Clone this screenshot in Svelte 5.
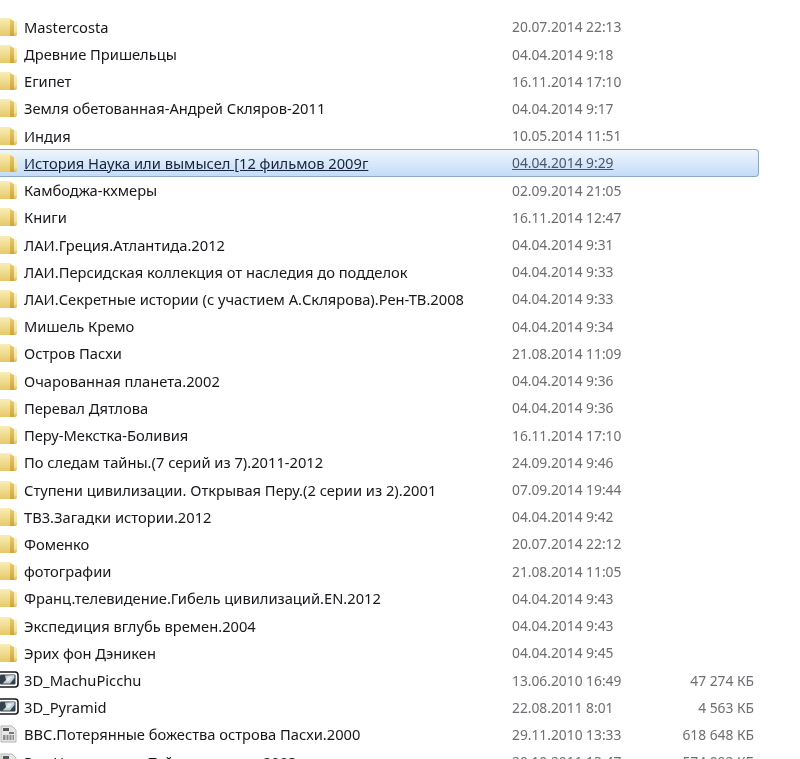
<script lang="ts">
	const folders = [
		['Mastercosta', '20.07.2014 22:13'],
		['Древние Пришельцы', '04.04.2014 9:18'],
		['Египет', '16.11.2014 17:10'],
		['Земля обетованная-Андрей Скляров-2011', '04.04.2014 9:17'],
		['Индия', '10.05.2014 11:51'],
		['История Наука или вымысел [12 фильмов 2009г', '04.04.2014 9:29'],
		['Камбоджа-кхмеры', '02.09.2014 21:05'],
		['Книги', '16.11.2014 12:47'],
		['ЛАИ.Греция.Атлантида.2012', '04.04.2014 9:31'],
		['ЛАИ.Персидская коллекция от наследия до подделок', '04.04.2014 9:33'],
		['ЛАИ.Секретные истории (с участием А.Склярова).Рен-ТВ.2008', '04.04.2014 9:33'],
		['Мишель Кремо', '04.04.2014 9:34'],
		['Остров Пасхи', '21.08.2014 11:09'],
		['Очарованная планета.2002', '04.04.2014 9:36'],
		['Перевал Дятлова', '04.04.2014 9:36'],
		['Перу-Мекстка-Боливия', '16.11.2014 17:10'],
		['По следам тайны.(7 серий из 7).2011-2012', '24.09.2014 9:46'],
		['Ступени цивилизации. Открывая Перу.(2 серии из 2).2001', '07.09.2014 19:44'],
		['ТВ3.Загадки истории.2012', '04.04.2014 9:42'],
		['Фоменко', '20.07.2014 22:12'],
		['фотографии', '21.08.2014 11:05'],
		['Франц.телевидение.Гибель цивилизаций.EN.2012', '04.04.2014 9:43'],
		['Экспедиция вглубь времен.2004', '04.04.2014 9:43'],
		['Эрих фон Дэникен', '04.04.2014 9:45']
	];

	const files = [
		{ name: '3D_MachuPicchu', date: '13.06.2010 16:49', size: '47 274 КБ', icon: 'app' },
		{ name: '3D_Pyramid', date: '22.08.2011 8:01', size: '4 563 КБ', icon: 'app' },
		{ name: 'BBC.Потерянные божества острова Пасхи.2000', date: '29.11.2010 13:33', size: '618 648 КБ', icon: 'video' },
		{ name: 'Рок.Неизвестная Тайна пирамид.2003', date: '20.10.2011 13:47', size: '574 092 КБ', icon: 'video' }
	];
</script>

{#snippet folderIcon()}
	<svg class="icon" width="20" height="20" viewBox="0 0 20 20">
		<defs>
			<linearGradient id="folder-back" x1="0" y1="0" x2="0" y2="1">
				<stop offset="0" stop-color="#f9eeb8" />
				<stop offset="1" stop-color="#e6c868" />
			</linearGradient>
			<linearGradient id="folder-front" x1="0" y1="0" x2="0" y2="1">
				<stop offset="0" stop-color="#e8cc6e" />
				<stop offset="1" stop-color="#cfa438" />
			</linearGradient>
			<linearGradient id="folder-edge" x1="0" y1="0" x2="0" y2="1">
				<stop offset="0" stop-color="#fbf0c0" />
				<stop offset="0.7" stop-color="#f4e29a" />
				<stop offset="1" stop-color="#d9b850" />
			</linearGradient>
		</defs>
		<path d="M0 1h11v18H0z" fill="url(#folder-back)" />
		<path d="M10 2l4 2v15h-4z" fill="url(#folder-front)" />
		<path d="M14 4h2c1 0 1 1 1 2v11c0 1-1 2-2 2h-1z" fill="url(#folder-edge)" />
	</svg>
{/snippet}

{#snippet appIcon()}
	<svg class="icon" width="20" height="20" viewBox="0 0 20 20">
		<rect x="-3" y="2" width="21" height="15" rx="3" fill="#fff" stroke="#16181c" stroke-width="1.6" />
		<rect x="0" y="4.500" width="15.500" height="10" rx="1" fill="#33424f" />
		<path d="M5 5.500l9.500-.500v3L10 13.500H2.500L6 10z" fill="#c4ced5" />
		<path d="M8 6.500h5L9 11H6z" fill="#e6ebee" />
	</svg>
{/snippet}

{#snippet videoIcon()}
	<svg class="icon" width="20" height="20" viewBox="0 0 20 20">
		<path d="M1 2h11l4 4v12H1z" fill="#e6e6e4" stroke="#b4b4b0" />
		<rect x="3" y="4" width="6" height="3" fill="#55585a" />
		<rect x="9" y="8" width="5" height="2" fill="#77797a" />
		<rect x="3" y="11" width="11" height="5" fill="#8b8d8c" />
		<path d="M6 11v5M9 11v5M12 11v5" stroke="#e6e6e4" />
	</svg>
{/snippet}

<div class="list">
	{#each folders as [name, date], i}
		<div class="row" class:hot={i === 5}>
			{@render folderIcon()}
			<span class="name">{name}</span>
			<span class="date">{date}</span>
			<span class="size"></span>
		</div>
	{/each}
	{#each files as file}
		<div class="row">
			{#if file.icon === 'app'}
				{@render appIcon()}
			{:else}
				{@render videoIcon()}
			{/if}
			<span class="name">{file.name}</span>
			<span class="date">{file.date}</span>
			<span class="size">{file.size}</span>
		</div>
	{/each}
</div>

<style>
	:global(body) {
		margin: 0;
		background: #fff;
	}

	.list {
		height: 759px;
		overflow: hidden;
		padding-top: 13.2px;
		box-sizing: border-box;
		font-family: 'Noto Sans', 'Open Sans', sans-serif;
		font-size: 14.7px;
		filter: blur(0.35px);
	}

	.row {
		display: grid;
		grid-template-columns: 24px 488px 162px 80px;
		align-items: center;
		height: 27.22px;
		width: 759px;
		box-sizing: border-box;
		white-space: nowrap;
	}

	.icon {
		display: block;
		overflow: hidden;
	}

	.name {
		color: #17171c;
	}

	.date,
	.size {
		color: #6d6d72;
		font-size: 13.8px;
	}

	.size {
		text-align: right;
	}

	.hot {
		border: 1px solid #8aa6c6;
		border-left: none;
		border-radius: 0 4px 4px 0;
		background: linear-gradient(#eef5fd, #c4dcf8);
	}

	.hot .name,
	.hot .date {
		text-decoration: underline;
	}

	.hot .name {
		color: #16233a;
	}

	.hot .date {
		color: #4c5566;
	}
</style>
